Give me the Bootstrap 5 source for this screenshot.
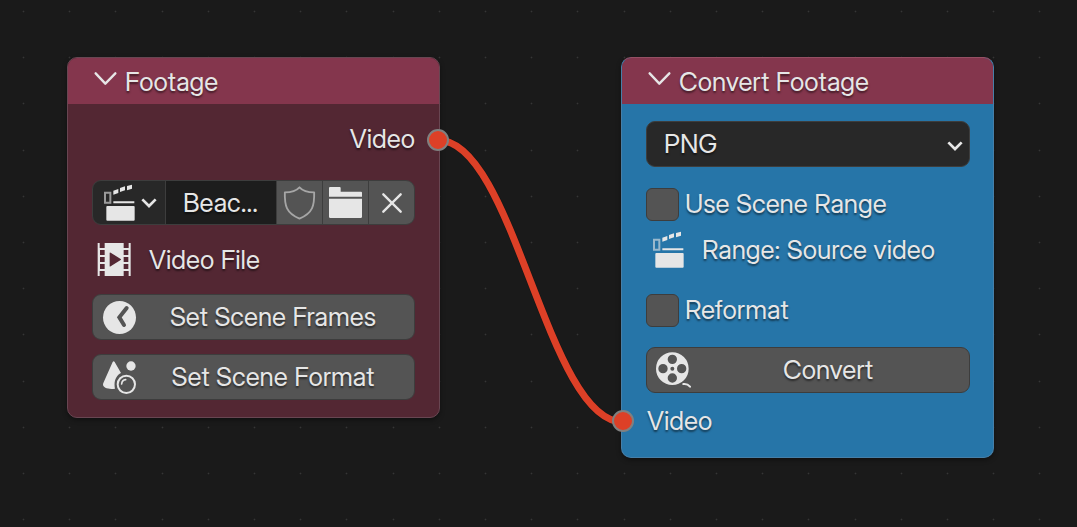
<!DOCTYPE html>
<html lang="en" data-bs-theme="dark">
<head>
<meta charset="utf-8">
<meta name="viewport" content="width=device-width, initial-scale=1">
<title>Node editor</title>
<link href="https://cdn.jsdelivr.net/npm/bootstrap@5.3.0/dist/css/bootstrap.min.css" rel="stylesheet">
<style>
  body { font-family: "Inter Display", Inter, "Liberation Sans", sans-serif; font-variation-settings: "opsz" 29; font-size: 26px; line-height: 32px; color: #e6e6e6; background: #1a1a1a; }
  svg { display: block; flex: none; fill: #e6e6e6; }
  .editor { min-height: 100vh; text-shadow: 0 2px 2px rgba(0, 0, 0, .5); }
  .wires { overflow: visible; }
  .node { width: 373px; border: 1px solid #684652; border-radius: 10px; box-shadow: 0 2px 5px rgba(0, 0, 0, .4); }
  .node-source { left: 67px; top: 57px; background: #532733; }
  .node-convert { left: 621px; top: 57px; background: #2675a8; border-color: #467fa8; border-top-color: #955064; }
  .node-head { height: 46px; padding: 0 0 0 26px; gap: 8px; border: 0; background: #84364d; border-radius: 9px 9px 0 0; color: inherit; font-size: inherit; font-variation-settings: "opsz" 32; text-shadow: inherit; }
  .node-head:hover { background: #924059; color: #fff; }
  .node-head svg { margin-bottom: 4px; }
  .source-body { padding: 12px 24px 17px; gap: 14px; }
  .convert-body { padding: 17px 23px 13px 24px; }
  .apart { margin-top: 14px; }
  .field-row { min-height: 46px; }
  .tick-row { gap: 6px; }
  .icon-row { min-height: 41px; gap: 14px; }
  .range-row { gap: 16px; padding-left: 6px; }
  .input-row { margin-top: 5px; padding-left: 1px; }
  .tool { height: 46px; background: #545454; border: 1px solid #3d3d3d; border-radius: 9px; color: inherit; font-size: inherit; line-height: inherit; text-shadow: inherit; padding: 0 5px 0 9px; }
  .tool:hover { background: #646464; color: #fff; }
  .picker .cell { height: 45px; width: 47px; padding: 0; border: 1px solid #3d3d3d; background: #545454; margin-left: -1px; border-radius: 0; }
  .picker .cell-type { width: 74px; margin-left: 0; background: #282828; border-radius: 9px 0 0 9px; padding-left: 10px; }
  .picker .cell-end { border-radius: 0 9px 9px 0; }
  .picker .name { min-width: 0; height: 45px; margin-left: -1px; padding: 0 0 0 17px; border: 1px solid #3d3d3d; border-radius: 0; background: #1d1d1d; color: inherit; font-size: inherit; line-height: 32px; text-shadow: inherit; }
  .format { height: 46px; padding: 0 40px 0 17px; font-size: inherit; color: inherit; line-height: 44px; border: 1px solid #3d3d3d; border-radius: 9px; text-shadow: inherit;
    background: #282828 url("data:image/svg+xml,%3Csvg xmlns='http://www.w3.org/2000/svg' viewBox='0 0 48 33'%3E%3Cpath d='M4 7l20 20L44 7' fill='none' stroke='%23e6e6e6' stroke-width='8'/%3E%3C/svg%3E") no-repeat right 6px top 18px / 16px 11px; }
  .form-check-input.tick { width: 33px; height: 33px; margin: 0; background-color: #545454; border: 1px solid #3d3d3d; border-radius: 6px; }
  .form-check-input.tick:checked { background-color: #4772b3; }
  .socket { width: 22px; height: 22px; border: 2px solid #808080; border-radius: 50%; background: #dd4027; }
  .socket-out { right: -10px; top: 71px; }
  .socket-in { left: -10px; bottom: 25px; }
</style>
</head>
<body>
<svg class="d-none" aria-hidden="true">
  <symbol id="i-clapper" viewBox="70 40 102 114">
    <path d="M76 66.500H92V96.500H76z" fill="none" stroke="#e6e6e6" stroke-opacity=".6" stroke-width="6"/>
    <path d="M101 60l15-5v12l-15 5zM121 52l15-5v12l-15 5zM142 46l15-4v12l-15 5zM101 92h63v6h-63z"/>
    <rect x="80" y="106" width="85" height="44" rx="3"/>
  </symbol>
  <symbol id="i-down" viewBox="0 0 48 33"><path d="M4 7l20 20L44 7" fill="none" stroke="#e6e6e6" stroke-width="8"/></symbol>
  <symbol id="i-reveal" viewBox="0 0 69 42"><path d="M5 4l29 31L64 4" fill="none" stroke="#e6e6e6" stroke-width="7" stroke-linecap="round" stroke-linejoin="round"/></symbol>
</svg>

<main class="editor position-relative overflow-hidden">
  <svg class="wires position-absolute top-0 start-0 w-100 h-100" aria-hidden="true">
    <defs>
      <pattern id="dot-row" width="231" height="231" patternUnits="userSpaceOnUse">
        <g id="dots" fill="#363636">
          <path d="M23 11h1v1h-1zM69 11h1v1h-1zM115 11h1v1h-1zM162 11h1v1h-1zM208 11h1v1h-1z" stroke="#363636" stroke-width=".6"/>
        </g>
        <use href="#dots" y="46"/><use href="#dots" y="92"/><use href="#dots" y="139"/><use href="#dots" y="185"/>
      </pattern>
    </defs>
    <rect width="100%" height="100%" fill="url(#dot-row)"/>
    <path d="M438 140C514 140 547 422 623 422" fill="none" stroke="#161616" stroke-width="8"/>
    <path d="M438 140C514 140 547 422 623 422" fill="none" stroke="#dd4027" stroke-width="7"/>
  </svg>

  <section class="node node-source position-absolute">
    <button type="button" class="node-head btn w-100 d-flex align-items-center">
      <svg width="23" height="14"><use href="#i-reveal"/></svg><span>Footage</span>
    </button>
    <div class="source-body d-flex flex-column">
      <div class="field-row d-flex align-items-center justify-content-end">Video</div>
      <div class="picker d-flex mt-1">
        <button type="button" class="btn cell cell-type d-flex align-items-center" aria-label="Choose clip">
          <svg width="34" height="38"><use href="#i-clapper"/></svg><svg class="ms-1" width="16" height="11"><use href="#i-down"/></svg>
        </button>
        <input class="name form-control flex-grow-1 w-auto" type="text" value="Beac..." size="1" aria-label="Clip name">
        <button type="button" class="btn cell d-flex align-items-center justify-content-center" aria-label="Fake user">
          <svg width="33" height="34" viewBox="99 47 99 102"><path d="M148.500 51c-9 10-24 15-44 15-1 40 4 62 44 79 40-17 45-39 44-79-20 0-35-5-44-15z" fill="none" stroke="#a6a6a6" stroke-width="5.500" stroke-linejoin="round"/></svg>
        </button>
        <button type="button" class="btn cell d-flex align-items-center justify-content-center" aria-label="Open clip">
          <svg width="33" height="31" viewBox="0 0 99 93"><path d="M0 3q0-3 3-3h29q3 0 3 3v11h61q3 0 3 3v12H0zM0 35h99v54q0 4-4 4H4q-4 0-4-4z"/></svg>
        </button>
        <button type="button" class="btn cell cell-end d-flex align-items-center justify-content-center" aria-label="Unlink clip">
          <svg width="20" height="20" viewBox="0 0 60 60"><path d="M4 4l52 52M56 4L4 56" stroke="#e6e6e6" stroke-width="7" stroke-linecap="round"/></svg>
        </button>
      </div>
      <div class="icon-row d-flex align-items-center ps-1">
        <svg width="35" height="33" viewBox="49 222 105 99"><path fill-rule="evenodd" d="M54 222h6v15h15v-15h57v15h15v-15h6v99h-6v-15h-15v15H75v-15H60v15h-6zM61 243v15h14v-15zM61 264v15h14v-15zM61 285v15h14v-15zM132 243v15h14v-15zM132 264v15h14v-15zM132 285v15h14v-15zM90 252v39q0 3 3 1l30-19q2-1 0-3l-30-19q-3-2-3 1z"/></svg>
        <span class="ps-1">Video File</span>
      </div>
      <button type="button" class="btn tool d-flex align-items-center">
        <svg width="35" height="33" viewBox="66 48 105 99"><circle cx="118.500" cy="97.500" r="49.500"/><path d="M140 69l-22 28 14 23" fill="none" stroke="#545454" stroke-width="12" stroke-linecap="round"/></svg>
        <span class="flex-grow-1">Set Scene Frames</span>
      </button>
      <button type="button" class="btn tool d-flex align-items-center">
        <svg width="35" height="33" viewBox="66 228 105 99"><path d="M98 231q3-5 6 0l19 33c-14 7-23 25-18 47-25 3-42-5-34-19z"/><circle cx="153" cy="243" r="14"/><circle cx="139" cy="298" r="26" fill="none" stroke="#e6e6e6" stroke-width="6"/><path d="M125 297q1-12 12-13" fill="none" stroke="#e6e6e6" stroke-width="5" stroke-linecap="round"/></svg>
        <span class="flex-grow-1">Set Scene Format</span>
      </button>
    </div>
    <span class="socket socket-out position-absolute"></span>
  </section>

  <section class="node node-convert position-absolute">
    <button type="button" class="node-head btn w-100 d-flex align-items-center">
      <svg width="23" height="14"><use href="#i-reveal"/></svg><span>Convert Footage</span>
    </button>
    <div class="convert-body d-flex flex-column">
      <select class="format form-select" aria-label="Output format"><option>PNG</option><option>JPEG</option></select>
      <div class="field-row tick-row apart d-flex align-items-center">
        <input class="tick form-check-input" type="checkbox" id="use-range"><label for="use-range">Use Scene Range</label>
      </div>
      <div class="field-row range-row d-flex align-items-center">
        <svg width="34" height="38"><use href="#i-clapper"/></svg><span>Range: Source video</span>
      </div>
      <div class="field-row tick-row apart d-flex align-items-center">
        <input class="tick form-check-input" type="checkbox" id="reformat"><label for="reformat">Reformat</label>
      </div>
      <button type="button" class="btn tool apart d-flex align-items-center">
        <svg width="36" height="36" viewBox="60 201 108 108"><path fill-rule="evenodd" d="M60 251a49 49 0 1 0 98 0a49 49 0 1 0-98 0zM95 223a14 14 0 1 0 28 0a14 14 0 1 0-28 0zM95 279a14 14 0 1 0 28 0a14 14 0 1 0-28 0zM67 251a14 14 0 1 0 28 0a14 14 0 1 0-28 0zM123 251a14 14 0 1 0 28 0a14 14 0 1 0-28 0zM103 251a6 6 0 1 0 12 0a6 6 0 1 0-12 0z"/><path d="M142 297q12-2 20 8" fill="none" stroke="#e6e6e6" stroke-width="6" stroke-linecap="round"/></svg>
        <span class="flex-grow-1">Convert</span>
      </button>
      <div class="field-row input-row d-flex align-items-center">Video</div>
    </div>
    <span class="socket socket-in position-absolute"></span>
  </section>
</main>
<script src="https://cdn.jsdelivr.net/npm/bootstrap@5.3.0/dist/js/bootstrap.bundle.min.js"></script>
</body>
</html>
